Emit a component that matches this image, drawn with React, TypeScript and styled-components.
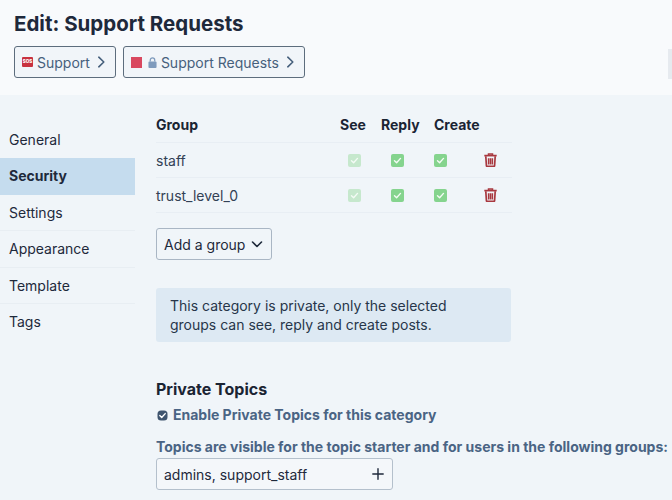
import React from "react";
import styled, { createGlobalStyle } from "styled-components";

const Global = createGlobalStyle`
  html, body { margin: 0; padding: 0; background: #f0f5f9; }
  body { font-family: Inter, "Liberation Sans", sans-serif; width: 672px; height: 500px; overflow: hidden; }
`;

const Page = styled.div`
  width: 672px;
  height: 500px;
  display: flex;
  flex-direction: column;
  overflow: hidden;
`;

const Header = styled.header`
  height: 95px;
  flex: none;
  box-sizing: border-box;
  padding: 11px 0 0 14px;
  background: #f8fafc;
  position: relative;
`;

const Title = styled.h1`
  margin: 0;
  font-size: 20.5px;
  line-height: 26px;
  font-weight: 700;
  color: #1e293b;
`;

const Crumbs = styled.div`
  display: flex;
  gap: 7px;
  margin-top: 9px;
`;

const Crumb = styled.div`
  height: 32px;
  box-sizing: border-box;
  display: flex;
  align-items: center;
  padding: 0 8px 0 7px;
  border: 1px solid #5d6d7d;
  border-radius: 3px;
  background: #f1f5f9;
  font-size: 14px;
  color: #46607c;
`;

const Square = styled.span`
  width: 11px;
  height: 11px;
  background: #d9485f;
  margin: 0 6px 0 0;
`;

const SosBadge = styled.span`
  width: 11px;
  height: 10px;
  margin-right: 4px;
  background: #c8323f;
  border-radius: 1px;
  display: flex;
  align-items: center;
  justify-content: center;
  color: #fff;
  font-size: 4.5px;
  font-weight: 800;
  line-height: 1;
`;

const Edge = styled.div`
  position: absolute;
  right: 0;
  top: 49px;
  width: 4px;
  height: 30px;
  background: #e6eaef;
`;

const Body = styled.div`
  flex: 1;
  display: flex;
  background: #f0f5f9;
`;

const Nav = styled.nav`
  width: 135px;
  flex: none;
  padding-top: 27px;
`;

const NavItem = styled.div<{ $active?: boolean; $rule?: boolean }>`
  height: 36.4px;
  box-sizing: border-box;
  padding: 0 0 ${(p) => (p.$active ? 2 : p.$rule ? 0 : 1)}px 9px;
  display: flex;
  align-items: center;
  font-size: 14px;
  font-weight: ${(p) => (p.$active ? 700 : 400)};
  color: #1e293b;
  background: ${(p) => (p.$active ? "#c5dcee" : "transparent")};
  border-bottom: ${(p) => (p.$rule ? "1px solid #e8eef3" : "none")};
`;

const Main = styled.main`
  flex: 1;
  padding: 14px 0 0 21px;
  min-width: 0;
`;

const HeadRow = styled.div`
  width: 356px;
  height: 34px;
  padding-bottom: 2px;
  display: grid;
  grid-template-columns: 184px 41px 53px 1fr;
  align-items: center;
  box-sizing: border-box;
  border-bottom: 1px solid #e8eef4;
`;

const Row = styled.div`
  width: 356px;
  height: 35px;
  display: grid;
  grid-template-columns: 178px 40px 46px 40px 1fr;
  align-items: center;
  box-sizing: border-box;
  border-bottom: 1px solid #e8eef4;
  font-size: 14px;
  color: #334155;
`;

const HeadCell = styled.div`
  font-size: 14px;
  font-weight: 700;
  color: #1a2433;
  white-space: nowrap;
`;

const IconCell = styled.div`
  display: flex;
  justify-content: center;
`;

const TrashCell = styled(IconCell)`
  padding-left: 8px;
`;

const Check = styled.span<{ $faded?: boolean }>`
  width: 13px;
  height: 13px;
  border-radius: 2px;
  background: ${(p) => (p.$faded ? "#c6e8cd" : "#85d48e")};
  display: flex;
  align-items: center;
  justify-content: center;
`;

const AddGroup = styled.div`
  margin-top: 15px;
  width: 116px;
  height: 32px;
  box-sizing: border-box;
  border: 1px solid #a9b6c4;
  border-radius: 3px;
  display: flex;
  align-items: center;
  justify-content: space-between;
  padding: 0 8px 0 7px;
  font-size: 14px;
  color: #1e293b;
`;

const Notice = styled.div`
  margin-top: 28px;
  width: 355px;
  height: 54px;
  box-sizing: border-box;
  padding: 8px 14px;
  background: #dde9f3;
  border-radius: 3px;
  font-size: 14px;
  line-height: 19px;
  color: #27364a;
`;

const SectionTitle = styled.h2`
  margin: 37px 0 0;
  font-size: 16px;
  line-height: 20px;
  font-weight: 700;
  color: #1a2433;
`;

const CheckLine = styled.div`
  margin-top: 7px;
  display: flex;
  align-items: center;
  gap: 5px;
  padding-left: 1px;
  font-size: 14px;
  line-height: 18px;
  font-weight: 700;
  color: #4a6484;
  white-space: nowrap;
`;

const Hint = styled.div`
  margin-top: 14px;
  font-size: 14px;
  line-height: 18px;
  font-weight: 700;
  color: #4a6484;
  white-space: nowrap;
`;

const Chooser = styled.div`
  margin-top: 2px;
  width: 237px;
  height: 32px;
  box-sizing: border-box;
  border: 1px solid #b4c0cc;
  border-radius: 3px;
  background: #f4f7fa;
  display: flex;
  align-items: center;
  justify-content: space-between;
  padding: 0 8px 0 7px;
  font-size: 14px;
  color: #1e293b;
`;

const Chevron = ({ color = "#46607c", down = false }: { color?: string; down?: boolean }) => (
  <svg width="12" height="12" viewBox="0 0 12 12" fill="none" stroke={color} strokeWidth="1.6" strokeLinecap="round" strokeLinejoin="round" style={{ marginLeft: down ? 0 : 5 }}>
    <path d={down ? "M1.5 4l4.5 4.5L10.5 4" : "M3.8 1.2L8.8 6 3.8 10.8"} />
  </svg>
);

const Lock = () => (
  <svg width="9" height="11" viewBox="0 0 10 12" style={{ marginRight: 4 }}>
    <rect x="0.5" y="5" width="9" height="7" rx="1" fill="#7f9bbd" />
    <path d="M2.5 5V3.4a2.5 2.5 0 0 1 5 0V5" fill="none" stroke="#7f9bbd" strokeWidth="1.4" />
  </svg>
);

const Tick = () => (
  <svg width="9" height="9" viewBox="0 0 9 9" fill="none" stroke="#f4fbf5" strokeWidth="1.4" strokeLinecap="round" strokeLinejoin="round">
    <path d="M1.5 4.8L3.6 6.8 7.5 2.4" />
  </svg>
);

const Trash = () => (
  <svg width="13" height="14" viewBox="0 0 13 14" fill="none" stroke="#a8383f" strokeWidth="1.5">
    <path d="M0.3 2.6h12.4" strokeWidth="1.7" />
    <path d="M4.5 2.2V0.9h4v1.3" />
    <path d="M1.8 3.2l.6 9.3c0 .5.4.9.9.9h6.4c.5 0 .9-.4.9-.9l.6-9.3" strokeWidth="1.7" />
    <path d="M4.6 5.2v6.3M6.5 5.2v6.3M8.4 5.2v6.3" />
  </svg>
);

const Plus = () => (
  <svg width="12" height="12" viewBox="0 0 12 12" stroke="#1e293b" strokeWidth="1.4" strokeLinecap="round">
    <path d="M6 .8v10.4M.8 6h10.4" />
  </svg>
);

const SmallCheck = () => (
  <svg width="11" height="11" viewBox="0 0 11 11">
    <rect x="0.5" y="0.5" width="10" height="10" rx="3.5" fill="#3f556f" />
    <path d="M2.8 5.6l1.9 1.9 3.5-3.9" fill="none" stroke="#fff" strokeWidth="1.4" strokeLinecap="round" strokeLinejoin="round" />
  </svg>
);

const groups = ["staff", "trust_level_0"];
const tabs = ["General", "Security", "Settings", "Appearance", "Template", "Tags"];

export default function App() {
  return (
    <Page>
      <Global />
      <Header>
        <Title>Edit: Support Requests</Title>
        <Crumbs>
          <Crumb>
            <SosBadge>SOS</SosBadge>
            Support
            <Chevron />
          </Crumb>
          <Crumb>
            <Square />
            <Lock />
            Support Requests
            <Chevron />
          </Crumb>
        </Crumbs>
        <Edge />
      </Header>
      <Body>
        <Nav>
          {tabs.map((t) => (
            <NavItem key={t} $active={t === "Security"} $rule={["Settings", "Appearance", "Template"].includes(t)}>
              {t}
            </NavItem>
          ))}
        </Nav>
        <Main>
          <HeadRow>
            <HeadCell>Group</HeadCell>
            <HeadCell>See</HeadCell>
            <HeadCell>Reply</HeadCell>
            <HeadCell>Create</HeadCell>
          </HeadRow>
          {groups.map((g) => (
            <Row key={g}>
              <div>{g}</div>
              <IconCell>
                <Check $faded>
                  <Tick />
                </Check>
              </IconCell>
              <IconCell>
                <Check>
                  <Tick />
                </Check>
              </IconCell>
              <IconCell>
                <Check>
                  <Tick />
                </Check>
              </IconCell>
              <TrashCell>
                <Trash />
              </TrashCell>
            </Row>
          ))}
          <AddGroup>
            Add a group
            <Chevron color="#1e293b" down />
          </AddGroup>
          <Notice>
            This category is private, only the selected
            <br />
            groups can see, reply and create posts.
          </Notice>
          <SectionTitle>Private Topics</SectionTitle>
          <CheckLine>
            <SmallCheck />
            Enable Private Topics for this category
          </CheckLine>
          <Hint>Topics are visible for the topic starter and for users in the following groups:</Hint>
          <Chooser>
            admins, support_staff
            <Plus />
          </Chooser>
        </Main>
      </Body>
    </Page>
  );
}
